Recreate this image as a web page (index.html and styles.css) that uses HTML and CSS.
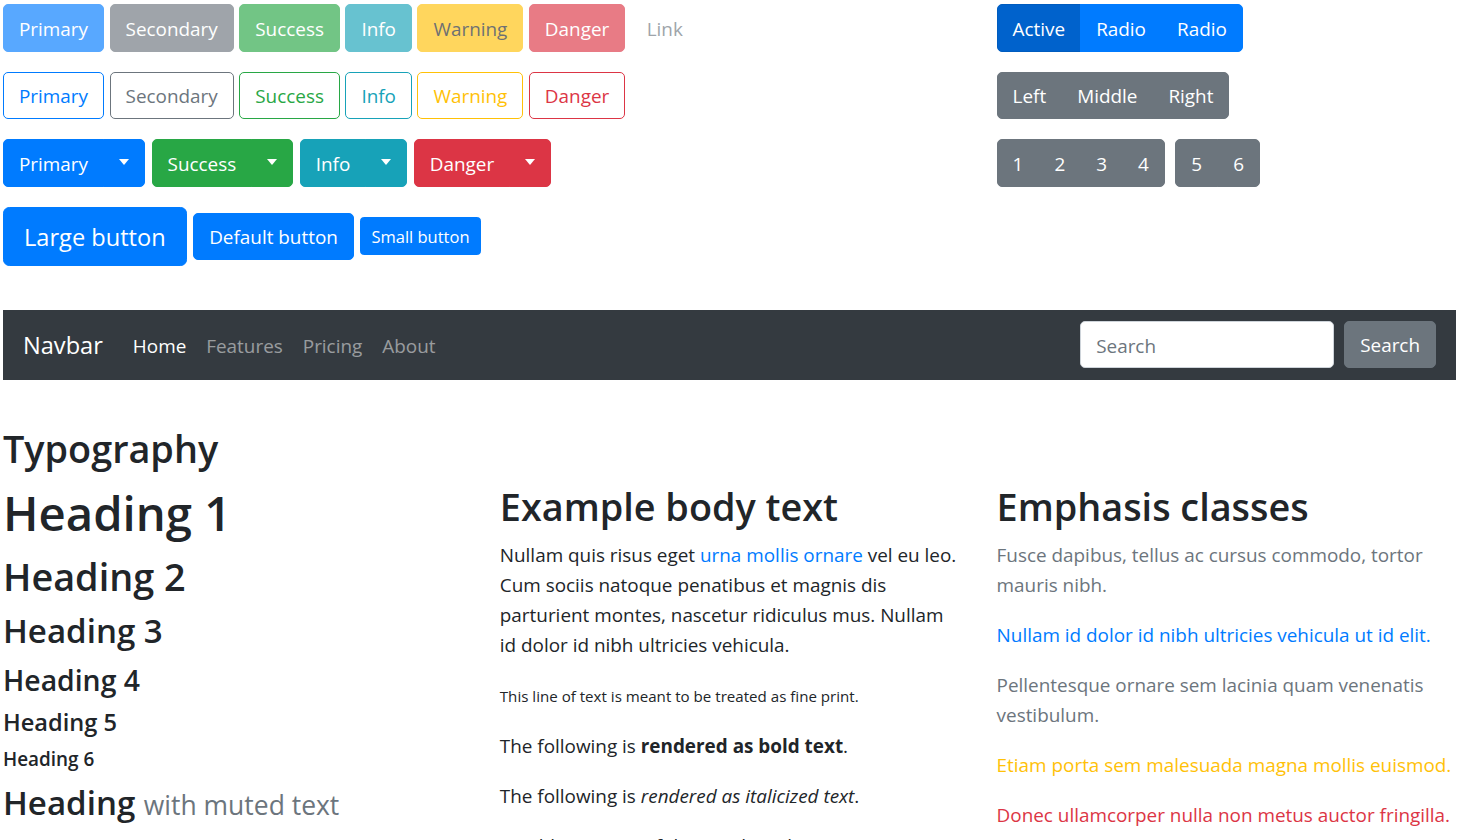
FILE: index.html
```html
<!DOCTYPE html>
<html lang="en">
<head>
<meta charset="utf-8">
<title>Bootstrap theme</title>
<link rel="stylesheet" href="styles.css">
</head>
<body>
<div class="page">
  <div class="top">
    <div class="top-left">
      <div class="btn-row first">
        <span class="btn btn-primary disabled">Primary</span>
        <span class="btn btn-secondary disabled">Secondary</span>
        <span class="btn btn-success disabled">Success</span>
        <span class="btn btn-info disabled">Info</span>
        <span class="btn btn-warning disabled">Warning</span>
        <span class="btn btn-danger disabled">Danger</span>
        <span class="btn btn-link disabled">Link</span>
      </div>
      <div class="btn-row first">
        <span class="btn btn-outline-primary">Primary</span>
        <span class="btn btn-outline-secondary">Secondary</span>
        <span class="btn btn-outline-success">Success</span>
        <span class="btn btn-outline-info">Info</span>
        <span class="btn btn-outline-warning">Warning</span>
        <span class="btn btn-outline-danger">Danger</span>
      </div>
      <div class="btn-row">
        <div class="btn-group"><span class="btn btn-primary">Primary</span><span class="btn btn-primary split"></span></div>
        <div class="btn-group"><span class="btn btn-success">Success</span><span class="btn btn-success split"></span></div>
        <div class="btn-group"><span class="btn btn-info">Info</span><span class="btn btn-info split"></span></div>
        <div class="btn-group"><span class="btn btn-danger">Danger</span><span class="btn btn-danger split"></span></div>
      </div>
      <div class="btn-row last">
        <span class="btn btn-primary btn-lg">Large button</span>
        <span class="btn btn-primary">Default button</span>
        <span class="btn btn-primary btn-sm">Small button</span>
      </div>
    </div>
    <div class="top-right">
      <div class="btn-row">
        <div class="btn-group">
          <span class="btn btn-primary active">Active</span>
          <span class="btn btn-primary">Radio</span>
          <span class="btn btn-primary">Radio</span>
        </div>
      </div>
      <div class="btn-row">
        <div class="btn-group">
          <span class="btn btn-secondary">Left</span>
          <span class="btn btn-secondary">Middle</span>
          <span class="btn btn-secondary">Right</span>
        </div>
      </div>
      <div class="btn-row toolbar">
        <div class="btn-group">
          <span class="btn btn-secondary">1</span>
          <span class="btn btn-secondary">2</span>
          <span class="btn btn-secondary">3</span>
          <span class="btn btn-secondary">4</span>
        </div>
        <div class="btn-group">
          <span class="btn btn-secondary">5</span>
          <span class="btn btn-secondary">6</span>
        </div>
      </div>
    </div>
  </div>

  <nav class="navbar">
    <a class="brand" href="#">Navbar</a>
    <div class="nav">
      <a class="nav-link active" href="#">Home</a>
      <a class="nav-link" href="#">Features</a>
      <a class="nav-link" href="#">Pricing</a>
      <a class="nav-link" href="#">About</a>
    </div>
    <form class="search">
      <input class="search-input" type="text" placeholder="Search">
      <span class="btn btn-secondary">Search</span>
    </form>
  </nav>

  <h1 class="typo-title">Typography</h1>
  <div class="cols">
    <div class="col">
      <h1>Heading 1</h1>
      <h2>Heading 2</h2>
      <h3>Heading 3</h3>
      <h4>Heading 4</h4>
      <h5>Heading 5</h5>
      <h6>Heading 6</h6>
      <h3>Heading <small class="muted">with muted text</small></h3>
      <p class="lead">Vivamus sagittis lacus vel augue laoreet rutrum faucibus dolor auctor.</p>
    </div>
    <div class="col">
      <h2>Example body text</h2>
      <p>Nullam quis risus eget <a href="#">urna mollis ornare</a> vel eu leo. Cum sociis natoque penatibus et magnis dis parturient montes, nascetur ridiculus mus. Nullam id dolor id nibh ultricies vehicula.</p>
      <p><small>This line of text is meant to be treated as fine print.</small></p>
      <p>The following is <strong>rendered as bold text</strong>.</p>
      <p>The following is <em>rendered as italicized text</em>.</p>
      <p>An abbreviation of the word attribute is <abbr title="attribute">attr</abbr>.</p>
    </div>
    <div class="col">
      <h2>Emphasis classes</h2>
      <p class="text-muted">Fusce dapibus, tellus ac cursus commodo, tortor mauris nibh.</p>
      <p class="text-primary">Nullam id dolor id nibh ultricies vehicula ut id elit.</p>
      <p class="text-secondary">Pellentesque ornare sem lacinia quam venenatis vestibulum.</p>
      <p class="text-warning">Etiam porta sem malesuada magna mollis euismod.</p>
      <p class="text-danger">Donec ullamcorper nulla non metus auctor fringilla.</p>
      <p class="text-success">Duis mollis, est non commodo luctus, nisi erat porttitor ligula.</p>
      <p class="text-info">Maecenas sed diam eget risus varius blandit sit amet non magna.</p>
    </div>
  </div>
</div>
</body>
</html>
```

FILE: styles.css
```css
* { box-sizing: border-box; }

html, body {
  margin: 0;
  background: #fff;
}

body {
  font-family: "Open Sans", "Noto Sans", "Liberation Sans", sans-serif;
  font-size: 18.9px;
  line-height: 30px;
  color: #212529;
}

a { color: #007bff; text-decoration: none; }

.page {
  width: 1453px;
  margin-left: 3px;
  padding-top: 4px;
}

/* ---------- buttons ---------- */
.top {
  display: grid;
  grid-template-columns: 459.3px 459.3px 459.3px;
  column-gap: 37.5px;
}
.top-left { grid-column: 1 / span 2; }

.btn-row {
  display: flex;
  align-items: center;
  gap: 6.5px;
  margin-bottom: 20px;
}
.btn-row.first { gap: 5.5px; }
.btn-row.last { margin-bottom: 0; }
.toolbar { gap: 10.5px; }

.btn {
  display: inline-block;
  font-size: 18.9px;
  line-height: 30px;
  padding: 8.5px 15px 7px;
  border: 1px solid transparent;
  border-radius: 5px;
  color: #fff;
  white-space: nowrap;
  text-align: center;
}
.btn-lg {
  font-size: 23.6px;
  line-height: 37.5px;
  padding: 11px 20px 9px;
  border-radius: 6.25px;
}
.btn-sm {
  font-size: 16.5px;
  line-height: 26.25px;
  padding: 5.5px 10px 4.5px;
  border-radius: 3.75px;
}

.disabled { opacity: .65; }

.btn-primary { background: #007bff; border-color: #007bff; }
.btn-secondary { background: #6c757d; border-color: #6c757d; }
.btn-success { background: #28a745; border-color: #28a745; }
.btn-info { background: #17a2b8; border-color: #17a2b8; }
.btn-warning { background: #ffc107; border-color: #ffc107; color: #212529; }
.btn-danger { background: #dc3545; border-color: #dc3545; }
.btn-link { color: #6c757d; }
.btn-primary.active { background: #0062cc; border-color: #005cbf; }

.btn-outline-primary { color: #007bff; border-color: #007bff; }
.btn-outline-secondary { color: #6c757d; border-color: #6c757d; }
.btn-outline-success { color: #28a745; border-color: #28a745; }
.btn-outline-info { color: #17a2b8; border-color: #17a2b8; }
.btn-outline-warning { color: #ffc107; border-color: #ffc107; }
.btn-outline-danger { color: #dc3545; border-color: #dc3545; }

.btn-group { display: inline-flex; }
.btn-group > .btn + .btn { margin-left: -1px; }
.btn-group > .btn:not(:last-child) { border-top-right-radius: 0; border-bottom-right-radius: 0; }
.btn-group > .btn:not(:first-child) { border-top-left-radius: 0; border-bottom-left-radius: 0; }

.split {
  display: flex;
  align-items: center;
  padding: 0 15px;
}
.split::after {
  content: "";
  display: block;
  margin-top: -1px;
  border-top: 6px solid #fff;
  border-left: 5.5px solid transparent;
  border-right: 5.5px solid transparent;
}

/* ---------- navbar ---------- */
.navbar {
  display: flex;
  align-items: center;
  height: 70px;
  margin-top: 43.5px;
  padding: 0 20px;
  background: #343a40;
}
.brand {
  font-size: 23.6px;
  line-height: 37.5px;
  padding-top: 2px;
  margin-right: 20px;
  color: #fff;
}
.nav { display: flex; padding-top: 2px; }
.nav-link {
  padding: 0 10px;
  color: rgba(255, 255, 255, .5);
}
.nav-link.active { color: #fff; }

.search {
  margin: 0 0 0 auto;
  display: flex;
  gap: 10px;
}
.search-input {
  width: 254px;
  height: 47.5px;
  padding: 9px 15px 6px;
  border: 1px solid #ced4da;
  border-radius: 5px;
  font-family: inherit;
  font-size: 18.9px;
  color: #495057;
  background: #fff;
  outline: none;
}
.search-input::placeholder { color: #6c757d; opacity: 1; }

/* ---------- typography ---------- */
h1, h2, h3, h4, h5, h6 {
  margin: 0 0 10px;
  font-weight: 600;
}
h1 { font-size: 47.25px; line-height: 60px; padding-top: 3px; margin-bottom: 7px; }
h2 { font-size: 37.8px; line-height: 48px; padding-top: 3.5px; margin-bottom: 6.5px; }
h3 { font-size: 33.1px; line-height: 42px; padding-top: 2.5px; margin-bottom: 7.5px; }
h4 { font-size: 28.35px; line-height: 36px; padding-top: 2px; margin-bottom: 8px; }
h5 { font-size: 23.6px; line-height: 30px; padding-top: 1.5px; margin-bottom: 8.5px; }
h6 { font-size: 18.9px; line-height: 24px; padding-top: 1.5px; margin-bottom: 8.5px; }

.typo-title {
  font-size: 37.8px;
  line-height: 48px;
  margin: 42px 0 6.5px;
  padding-top: 3.5px;
}

.cols {
  display: grid;
  grid-template-columns: 459.3px 459.3px 459.3px;
  column-gap: 37.5px;
}

p { margin: 0 0 18px; padding-top: 2px; }
small { font-size: 80%; font-weight: 400; }
.muted { color: #6c757d; }
.lead { font-size: 23.6px; font-weight: 300; line-height: 37.5px; }
abbr { text-decoration: underline dotted; cursor: help; }

.text-muted { color: #6c757d; }
.text-primary { color: #007bff; }
.text-secondary { color: #6c757d; }
.text-warning { color: #ffc107; }
.text-danger { color: #dc3545; }
.text-success { color: #28a745; }
.text-info { color: #17a2b8; }
```
